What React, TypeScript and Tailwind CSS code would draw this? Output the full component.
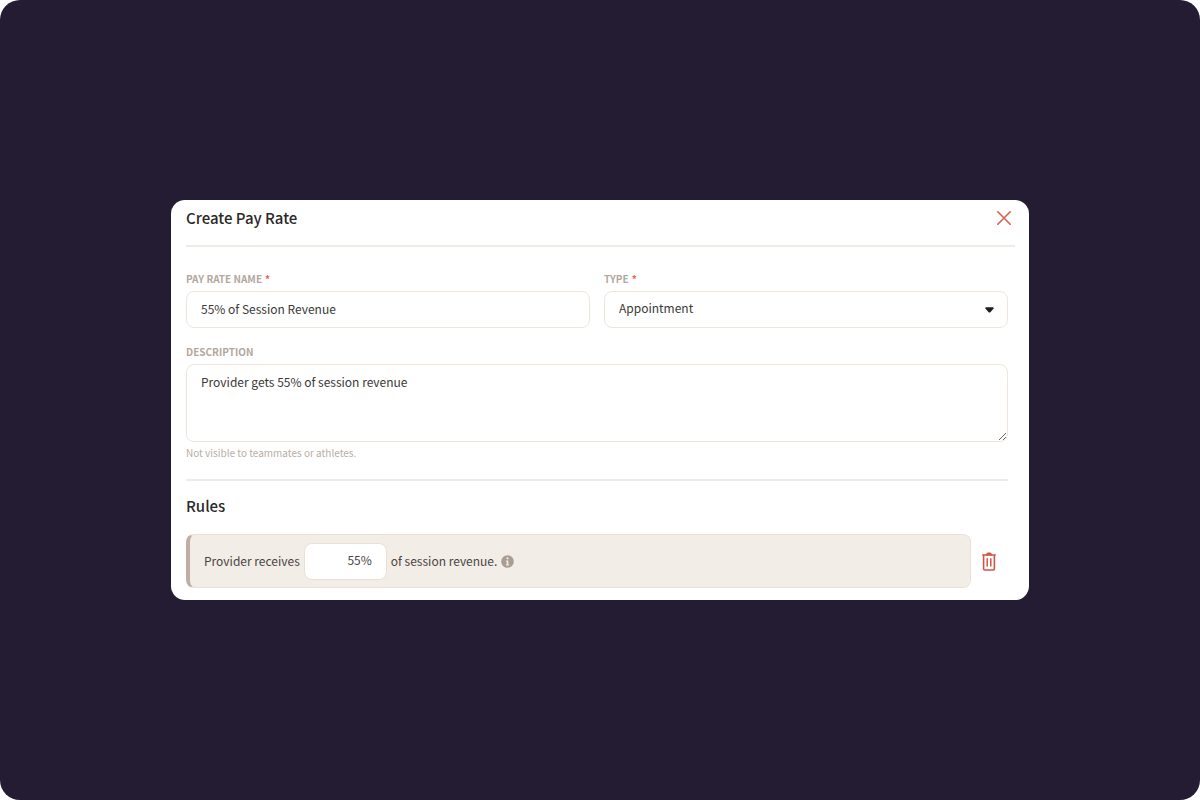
import { useState } from "react";

const labelClass = "flex gap-[3px] text-[10px] leading-4 font-bold uppercase text-[#b3a79e]";
const fieldClass =
  "block w-full rounded-lg border border-[#eee5dd] bg-white px-3.5 text-xs text-[#3a3838] outline-none focus:border-[#bfaea4]";

function Required() {
  return <span className="text-[#f4604d]">*</span>;
}

function CloseIcon() {
  return (
    <svg viewBox="0 0 14 14" className="size-3.5" fill="none" stroke="#d9604f" strokeWidth="1.6" strokeLinecap="round" aria-hidden="true">
      <path d="M.8.8l12.4 12.4M13.2.8L.8 13.2" />
    </svg>
  );
}

function TrashIcon() {
  return (
    <svg viewBox="0 0 14 19" className="h-[19px] w-3.5" fill="none" stroke="#d25443" strokeLinecap="round" strokeLinejoin="round" aria-hidden="true">
      <path d="M.8 3h12.4" strokeWidth="1.5" />
      <path d="M4.5 2.6L5.3 1h3.4l.8 1.6z" fill="#d25443" strokeWidth="1" />
      <path d="M1.6 3.2V16.8q0 1.2 1.2 1.2h8.4q1.2 0 1.2-1.2V3.2" strokeWidth="1.6" />
      <path d="M5.2 6.8v7.2M8.8 6.8v7.2" strokeWidth="1.5" />
    </svg>
  );
}

function InfoIcon() {
  return (
    <svg viewBox="0 0 13 13" className="size-[13px]" aria-hidden="true">
      <circle cx="6.5" cy="6.5" r="6.3" fill="#a99d94" />
      <circle cx="6.5" cy="3.3" r="1.1" fill="#f3ede7" />
      <path d="M5 5.4h2.3v4h.9v1H4.9v-1h.8v-3H5z" fill="#f3ede7" />
    </svg>
  );
}

export default function App() {
  const [name, setName] = useState("55% of Session Revenue");
  const [type, setType] = useState("Appointment");
  const [description, setDescription] = useState("Provider gets 55% of session revenue");
  const [share, setShare] = useState("55%");

  return (
    <div className="bg-white font-['Noto_Sans_CJK_SC',sans-serif]">
      <main className="flex min-h-screen items-center justify-center rounded-[20px] bg-[#241c32] px-4">
        <form
          aria-labelledby="form-title"
          onSubmit={(event) => event.preventDefault()}
          className="w-full max-w-[858px] rounded-[14px] bg-white pr-3.5 pb-3 pl-[15px]"
        >
          <header className="flex items-start justify-between border-b-2 border-[#f1ebe5] pt-1.5 pr-1 pb-[15px]">
            <h1 id="form-title" className="text-[15px] leading-6 font-medium text-[#2b2929]">
              Create Pay Rate
            </h1>
            <button type="button" aria-label="Close" className="flex h-6 items-center">
              <CloseIcon />
            </button>
          </header>

          <div className="pt-6 pr-[7px]">
            <div className="grid grid-cols-2 gap-3.5">
              <div>
                <label htmlFor="rate-name" className={labelClass}>
                  Pay Rate Name <Required />
                </label>
                <input
                  id="rate-name"
                  value={name}
                  onChange={(event) => setName(event.target.value)}
                  className={`${fieldClass} mt-1 h-[37px] pb-[3px]`}
                />
              </div>
              <div>
                <label htmlFor="rate-type" className={labelClass}>
                  Type <Required />
                </label>
                <div className="relative mt-1">
                  <select
                    id="rate-type"
                    value={type}
                    onChange={(event) => setType(event.target.value)}
                    className={`${fieldClass} h-[37px] appearance-none pb-[3px]`}
                  >
                    <option>Appointment</option>
                  </select>
                  <span className="pointer-events-none absolute inset-y-0 right-3.5 flex items-center">
                    <svg viewBox="0 0 9 6" className="h-1.5 w-[9px]" aria-hidden="true">
                      <path d="M1 .3h7q1 .2.6 1.2L5.4 5.2q-.9.8-1.8 0L.4 1.5Q0 .5 1 .3z" fill="#1f1d1d" />
                    </svg>
                  </span>
                </div>
              </div>
            </div>

            <label htmlFor="description" className={`${labelClass} mt-4`}>
              Description
            </label>
            <textarea
              id="description"
              value={description}
              onChange={(event) => setDescription(event.target.value)}
              aria-describedby="description-help"
              className={`${fieldClass} mt-1 h-[78px] resize-y py-[7px] leading-5`}
            />
            <p id="description-help" className="mt-[3px] text-[10px] leading-4 text-[#b8aea6]">
              Not visible to teammates or athletes.
            </p>

            <hr className="mt-[18px] border-t-2 border-[#f1ebe5]" />

            <h2 className="mt-[13px] text-[15px] leading-6 font-medium text-[#2b2929]">Rules</h2>

            <div className="mt-4 flex items-center gap-[11px]">
              <div className="flex h-[54px] flex-1 items-center rounded-lg border border-l-4 border-[#ebe0d6] border-l-[#bfaea4] bg-[#f3ede7] pl-3.5 text-xs text-[#4a4644]">
                <label htmlFor="share">Provider receives</label>
                <input
                  id="share"
                  value={share}
                  onChange={(event) => setShare(event.target.value)}
                  className="mx-1 h-[37px] w-[83px] rounded-lg border border-[#ebe0d6] bg-white px-3.5 pb-[3px] text-right outline-none"
                />
                <span>of session revenue.</span>
                <button type="button" aria-label="About session revenue" className="ml-1">
                  <InfoIcon />
                </button>
              </div>
              <button type="button" aria-label="Delete rule" className="mr-3">
                <TrashIcon />
              </button>
            </div>
          </div>
        </form>
      </main>
    </div>
  );
}
